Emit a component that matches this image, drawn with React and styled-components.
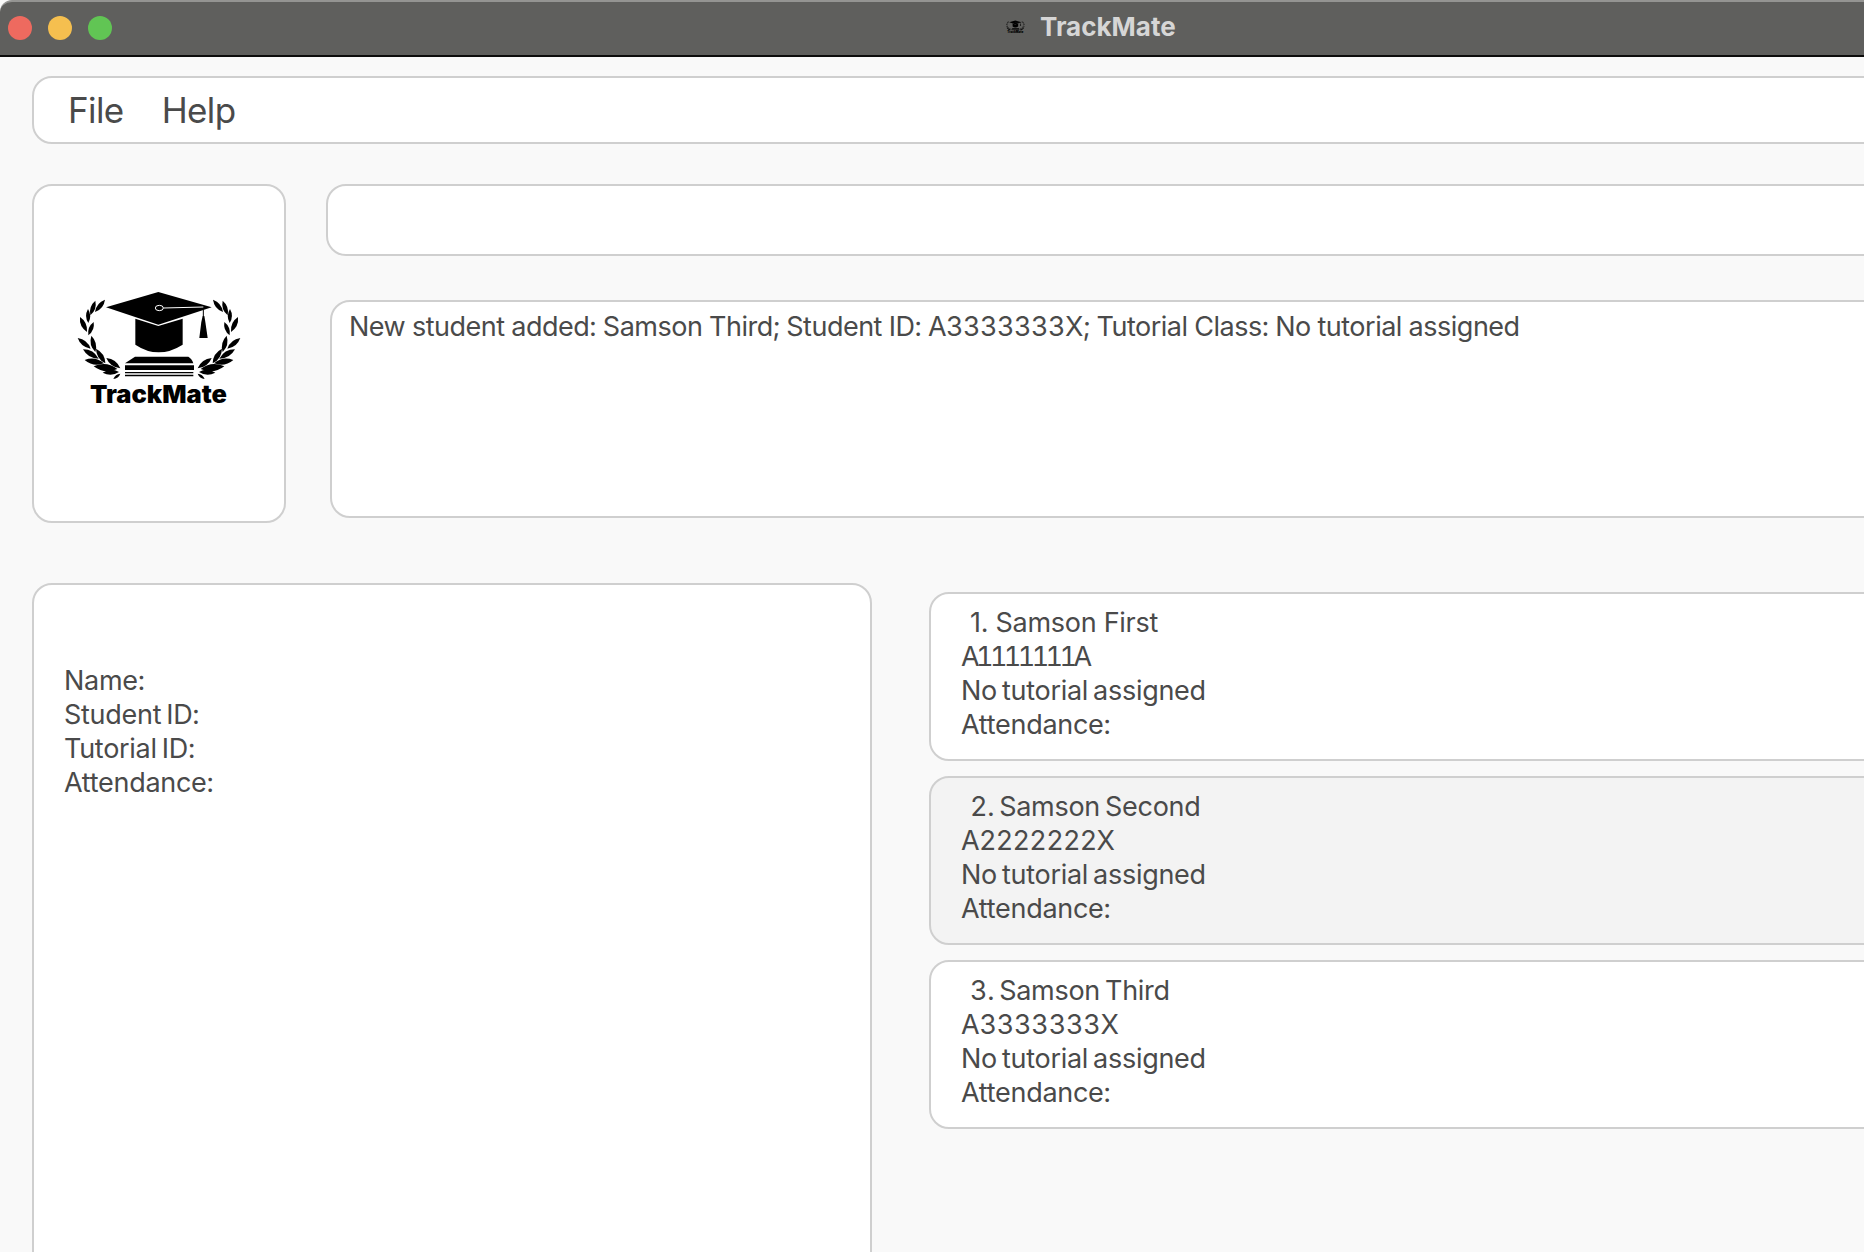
import React from "react";
import styled, { createGlobalStyle } from "styled-components";

const GlobalStyle = createGlobalStyle`
  html, body {
    margin: 0;
    padding: 0;
    background: #f9f9f9;
  }
  * {
    box-sizing: border-box;
  }
`;

const Window = styled.div`
  width: 100%;
  height: 100vh;
  overflow: hidden;
  background: #f9f9f9;
  color: #4a4a4a;
  font-family: Inter, "Liberation Sans", sans-serif;
  font-feature-settings: "tnum";
`;

const TitleBar = styled.div`
  display: flex;
  align-items: center;
  height: 57px;
  padding: 0 0 1px 8px;
  background: #5f5f5d;
  border-top: 2px solid #949492;
  border-bottom: 2px solid #0c0c0c;
  border-top-left-radius: 12px;
`;

const Light = styled.span`
  width: 24px;
  height: 24px;
  margin-right: 16px;
  border-radius: 50%;
  background: ${(props) => props.color};
`;

const TitleGroup = styled.div`
  display: flex;
  align-items: center;
  gap: 14px;
  margin-left: 877px;
  padding-bottom: 3px;
`;

const TitleText = styled.span`
  font-size: 26px;
  font-weight: 700;
  color: #d6d6d6;
`;

const Panel = styled.div`
  background: ${(props) => (props.shaded ? "#f3f3f3" : "#ffffff")};
  border: 2px solid #cfcfcf;
  border-radius: 20px;
`;

const Content = styled.div`
  padding: 19px 0 0 32px;
`;

const MenuBar = styled(Panel)`
  display: flex;
  align-items: center;
  gap: 38px;
  height: 68px;
  margin-right: -40px;
  padding-left: 34px;
  font-size: 35px;
  letter-spacing: -0.6px;
`;

const TopRow = styled.div`
  display: flex;
  gap: 40px;
  margin-top: 40px;
`;

const LogoCard = styled(Panel)`
  display: flex;
  flex: none;
  justify-content: center;
  width: 254px;
  height: 339px;
  padding: 102px 0 0 2px;
`;

const CommandColumn = styled.div`
  flex: 1;
  margin-right: -40px;
`;

const CommandBox = styled(Panel)`
  height: 72px;
`;

const ResultBox = styled(Panel)`
  height: 218px;
  margin: 44px 0 0 4px;
  padding: 8px 17px;
  font-size: 27px;
  line-height: 34px;
  letter-spacing: -0.5px;
`;

const BottomRow = styled.div`
  display: flex;
  gap: 57px;
  margin-top: 60px;
`;

const DetailPanel = styled(Panel)`
  flex: none;
  width: 840px;
  height: 800px;
  padding: 79px 30px;
`;

const StudentList = styled.div`
  display: flex;
  flex: 1;
  flex-direction: column;
  gap: 15px;
  margin-right: -40px;
  padding-top: 9px;
`;

const StudentCard = styled(Panel)`
  height: 169px;
  padding: 12px 30px;
`;

const TextLine = styled.div`
  font-size: 27px;
  line-height: 34px;
  letter-spacing: -0.28px;
  word-spacing: -2px;
`;

const NameLine = styled(TextLine)`
  padding-left: 9px;
  font-feature-settings: ${(props) => (props.narrow ? '"tnum" 0' : '"tnum"')};
  word-spacing: ${(props) => (props.narrow ? "0" : "-2px")};
`;

const IdLine = styled(TextLine)`
  letter-spacing: ${(props) => props.spacing}px;
`;

const students = [
  { index: 1, name: "Samson First", id: "A1111111A", idSpacing: -3.6 },
  { index: 2, name: "Samson Second", id: "A2222222X", idSpacing: -0.7 },
  { index: 3, name: "Samson Third", id: "A3333333X", idSpacing: -0.2 },
];

// one laurel leaf, a lens between two points
const leafPath = ([x1, y1, x2, y2], bulge = 0.3) => {
  const mx = (x1 + x2) / 2;
  const my = (y1 + y2) / 2;
  const nx = -(y2 - y1) * bulge;
  const ny = (x2 - x1) * bulge;
  return `M${x1} ${y1}Q${mx + nx} ${my + ny} ${x2} ${y2}Q${mx - nx} ${my - ny} ${x1} ${y1}Z`;
};

const leaves = [
  [255, 375, 225, 412],
  [226, 378, 211, 422],
  [204, 403, 205, 445],
  [180, 427, 201, 472],
  [221, 442, 205, 482],
  [173, 490, 212, 522],
  [214, 483, 226, 532],
  [189, 524, 236, 552],
  [228, 522, 256, 566],
  [194, 556, 252, 566],
  [259, 550, 301, 581],
  [221, 575, 292, 583],
  [248, 594, 297, 592],
  [280, 613, 301, 597],
];

const Logo = ({ width, height, cut }) => (
  <svg width={width} height={height} viewBox="150 340 540 360" fill="#000">
    {leaves.map((leaf) => (
      <React.Fragment key={leaf.join("-")}>
        <path d={leafPath(leaf)} />
        <path
          d={leafPath([834 - leaf[0], leaf[1], 834 - leaf[2], leaf[3]])}
        />
      </React.Fragment>
    ))}
    <path d="M415 352L575 398L415 450L258 398Z" />
    <path d="M346 432L415 454L488 432V510Q415 556 346 510Z" />
    <ellipse cx="418" cy="400" rx="12" ry="8" fill="none" stroke={cut} strokeWidth="3" />
    <path d="M430 400L550 397" stroke={cut} strokeWidth="3" />
    <path d="M550 405V426" stroke="#000" strokeWidth="3" />
    <path d="M548 424H553L556 442L563 490H538L544 442Z" />
    <path d="M315 566L345 546H505Q516 552 520 566Z" />
    <path d="M315 572H522V586H315Z" />
    <path d="M315 592H520V596H315Z" />
    <path d="M315 600H520V605H315Z" />
    <text
      x="210"
      y="685"
      fontFamily="Inter, sans-serif"
      fontSize="73"
      fontWeight="900"
      textLength="411"
      lengthAdjust="spacingAndGlyphs"
    >
      TrackMate
    </text>
  </svg>
);

function App() {
  return (
    <Window>
      <GlobalStyle />
      <TitleBar>
        <Light color="#ee6a5f" />
        <Light color="#f5bf4f" />
        <Light color="#61c554" />
        <TitleGroup>
          <Logo width={21} height={14} cut="#5f5f5d" />
          <TitleText>TrackMate</TitleText>
        </TitleGroup>
      </TitleBar>
      <Content>
        <MenuBar>
          <span>File</span>
          <span>Help</span>
        </MenuBar>
        <TopRow>
          <LogoCard>
            <Logo width={180} height={120} cut="#fff" />
          </LogoCard>
          <CommandColumn>
            <CommandBox />
            <ResultBox>
              New student added: Samson Third; Student ID: A3333333X; Tutorial
              Class: No tutorial assigned
            </ResultBox>
          </CommandColumn>
        </TopRow>
        <BottomRow>
          <DetailPanel>
            <TextLine>Name:</TextLine>
            <TextLine>Student ID:</TextLine>
            <TextLine>Tutorial ID:</TextLine>
            <TextLine>Attendance:</TextLine>
          </DetailPanel>
          <StudentList>
            {students.map((student) => (
              <StudentCard key={student.id} shaded={student.index === 2}>
                <NameLine narrow={student.index === 1}>
                  {student.index}. {student.name}
                </NameLine>
                <IdLine spacing={student.idSpacing}>{student.id}</IdLine>
                <TextLine>No tutorial assigned</TextLine>
                <TextLine>Attendance:</TextLine>
              </StudentCard>
            ))}
          </StudentList>
        </BottomRow>
      </Content>
    </Window>
  );
}

export default App;
